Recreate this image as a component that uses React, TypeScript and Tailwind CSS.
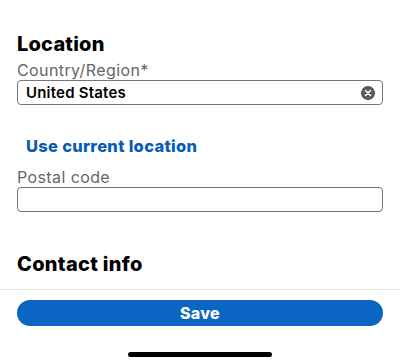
export default function App() {
  return (
    <div className="w-[400px] h-[364px] bg-white overflow-hidden font-['Inter',sans-serif] text-black">
      <section className="px-[17px] pt-[32px]">
        <h2 className="text-[20px] leading-[24px] font-extrabold tracking-[0.2px]">Location</h2>
        <label className="block mt-[4px] text-[16px] leading-[20px] text-[#666666] tracking-[0.4px]">
          Country/Region*
        </label>
        <div className="flex items-center h-[25px] border border-[#767676] rounded-[4px] pl-[8px] pr-[7px]">
          <span className="flex-1 text-[15px] font-semibold leading-[20px] tracking-[0.2px]">United States</span>
          <span className="flex items-center justify-center w-[14px] h-[14px] rounded-full bg-[#5a5a5a]">
            <svg width="8" height="8" viewBox="0 0 8 8">
              <path d="M1.5 1.5l5 5M6.5 1.5l-5 5" stroke="white" strokeWidth="1.6" strokeLinecap="round" />
            </svg>
          </span>
        </div>
        <button className="block mt-[31px] ml-[9px] text-[16.5px] leading-[20px] font-extrabold text-[#0a5cb3] tracking-[0.3px]">
          Use current location
        </button>
        <label className="block mt-[11px] text-[16px] leading-[20px] text-[#666666] tracking-[0.4px]">
          Postal code
        </label>
        <div className="h-[25px] border border-[#767676] rounded-[4px]" />
        <h2 className="mt-[40px] text-[20px] leading-[24px] font-extrabold tracking-[0.3px]">Contact info</h2>
      </section>
      <div className="mt-[13px] border-t border-[#e6e6e6]" />
      <div className="px-[17px] mt-[10px]">
        <button className="w-full h-[26px] rounded-full bg-[#0a66c2] text-white text-[16px] font-extrabold leading-[20px] tracking-[0.3px]">
          Save
        </button>
      </div>
      <div className="mx-auto mt-[26px] w-[144px] h-[5px] rounded-full bg-black" />
    </div>
  );
}
